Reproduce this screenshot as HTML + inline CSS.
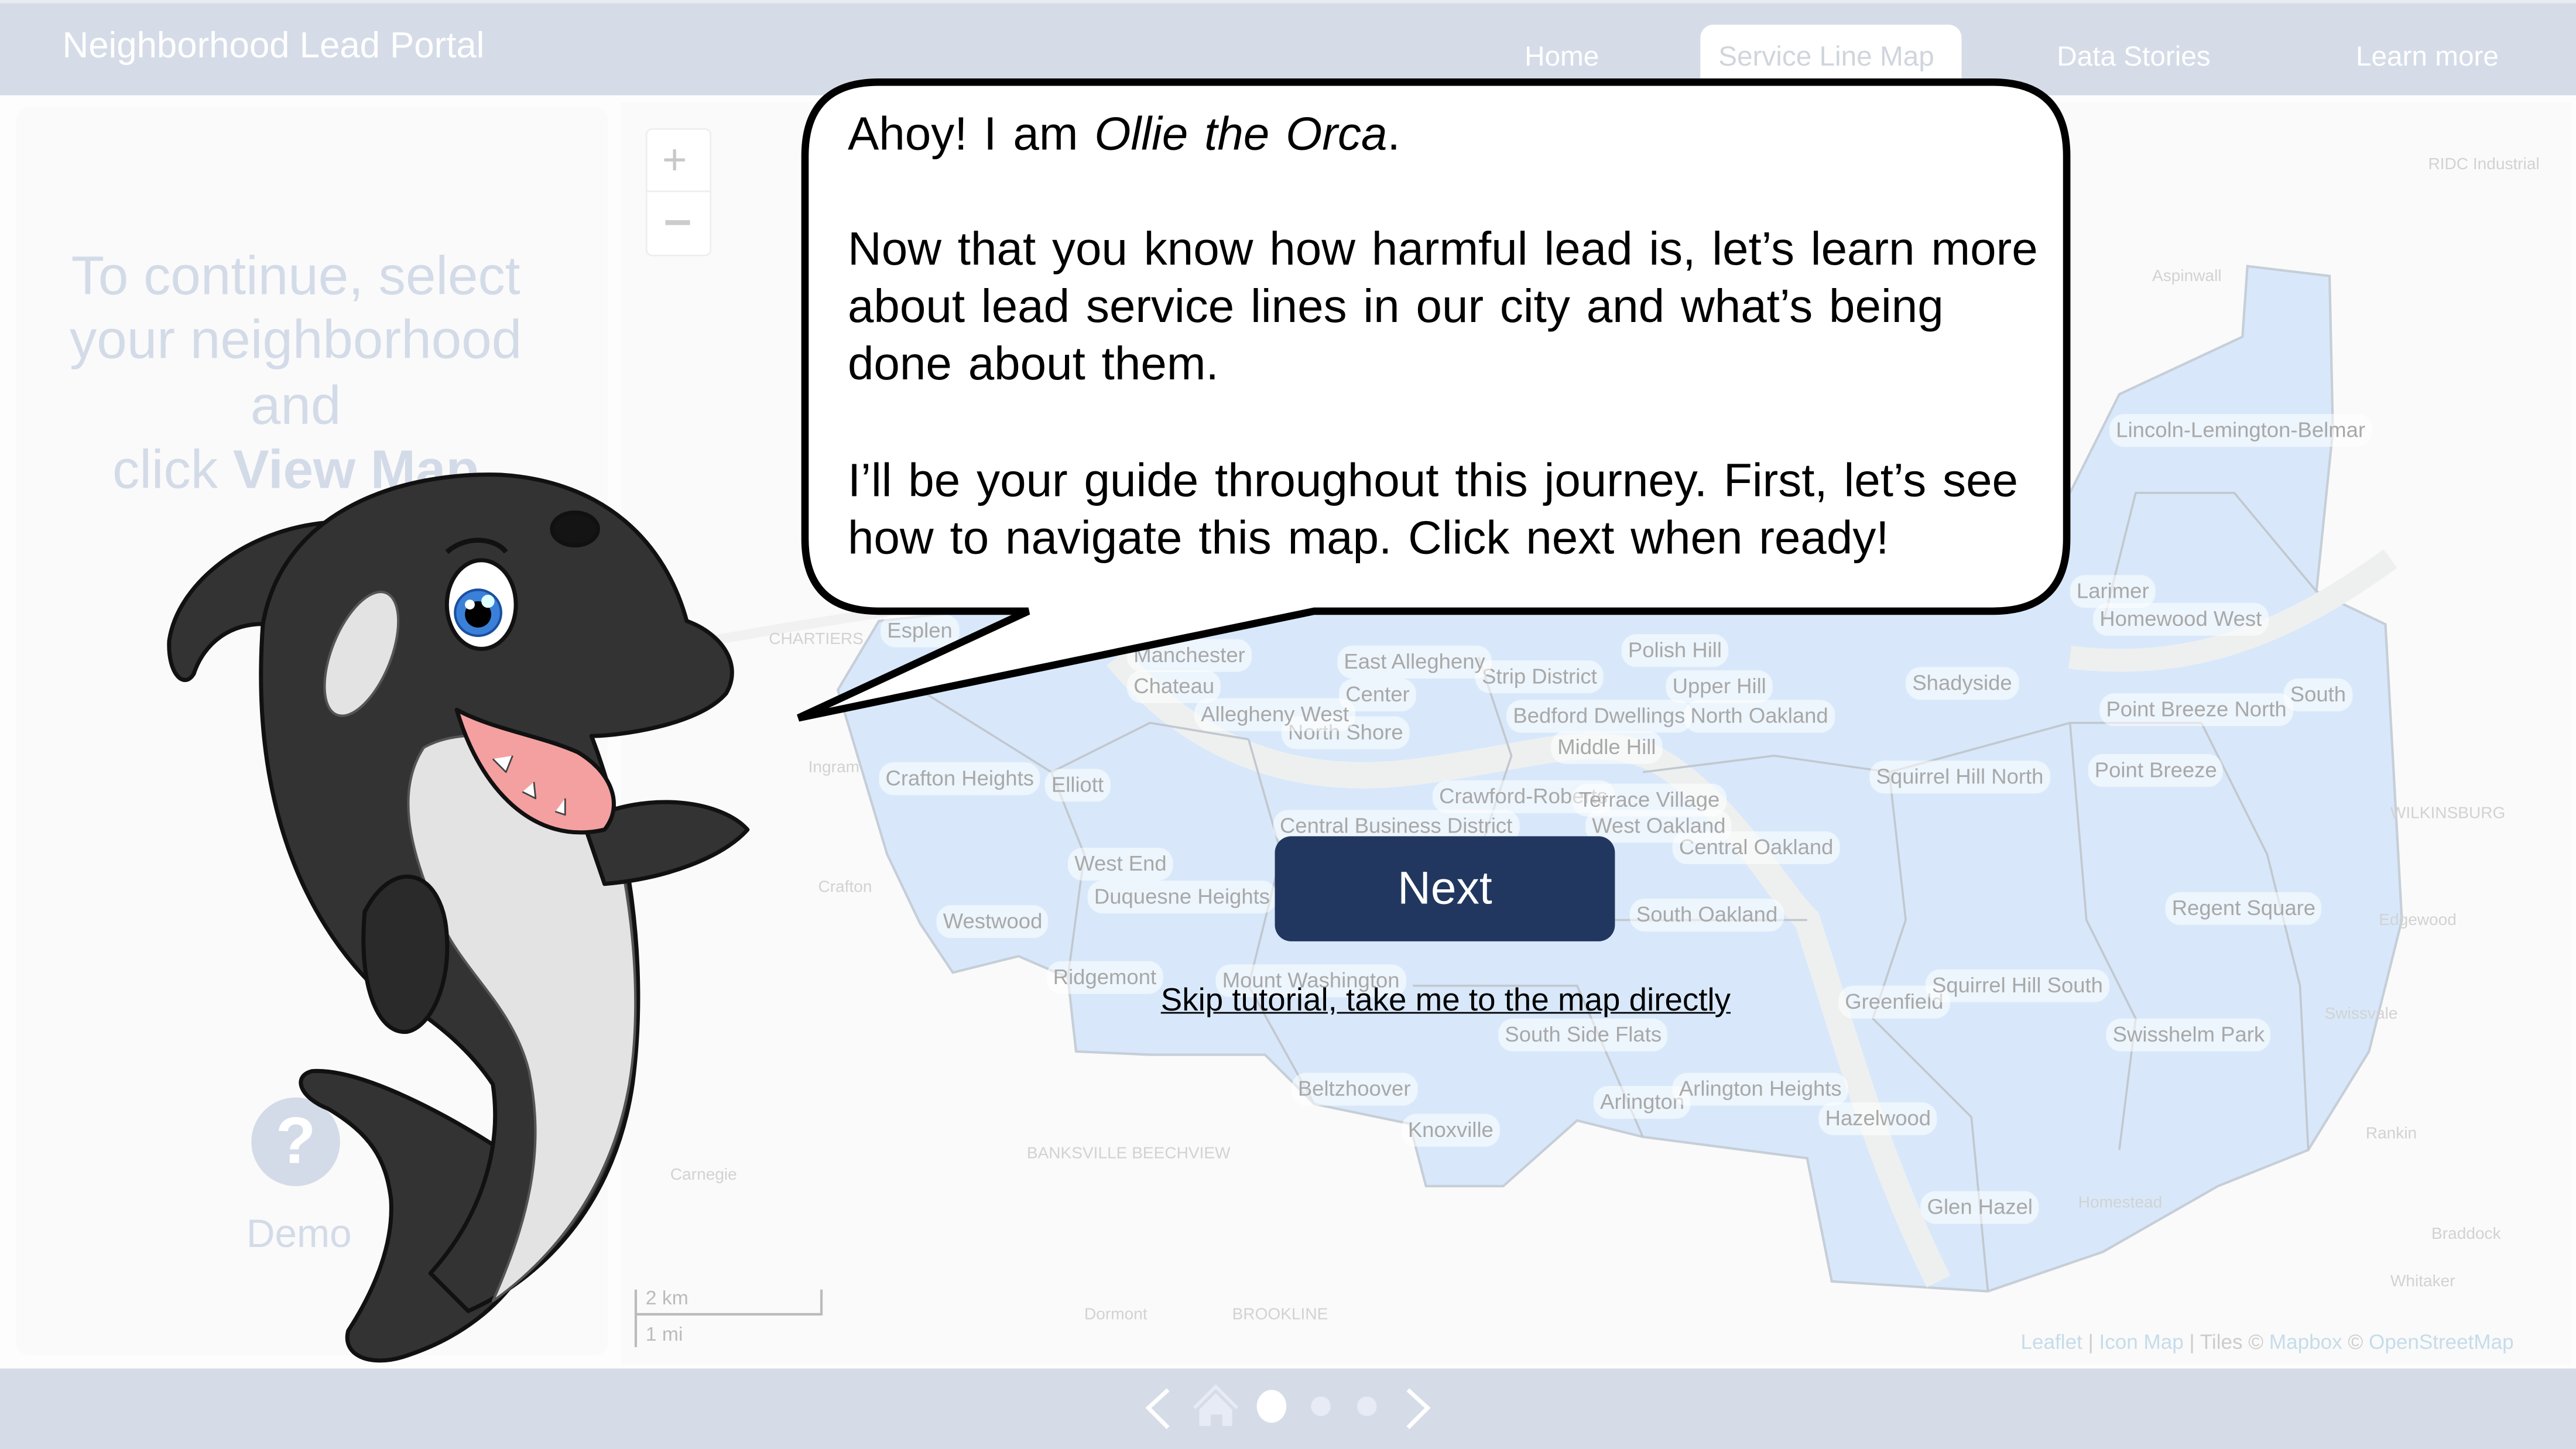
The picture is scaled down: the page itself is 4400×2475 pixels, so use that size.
<!DOCTYPE html>
<html><head><meta charset="utf-8">
<style>
html,body{margin:0;padding:0;width:4400px;height:2475px;overflow:hidden;background:#fff}
#s{position:absolute;left:0;top:0;width:1568px;height:882px;transform:scale(2.80612,2.80612);transform-origin:0 0;font-family:"Liberation Sans",Arial,sans-serif;background:#fff;overflow:hidden}
.abs{position:absolute}
.hdr{left:0;top:0;width:1568px;height:57px;background:#d5dce8;border-top:2px solid #e8ecf2}
.nav{color:#fff;font-size:17px;top:25px}
.lbl{position:absolute;background:rgba(255,255,255,0.55);border-radius:9px;color:#a8a8a8;font-size:13px;padding:2px 4px;white-space:nowrap;line-height:16px}
.faint{position:absolute;color:#d2d2d2;font-size:10px;white-space:nowrap}
.bt{font-size:28.5px;color:#000;position:absolute;left:516px;white-space:nowrap;word-spacing:2px}
</style></head><body>
<div id="s">
<div class="abs hdr"></div>
<div class="abs" style="left:38px;top:15px;color:#fff;font-size:22px;">Neighborhood Lead Portal</div>
<div class="abs nav" style="left:928px;">Home</div>
<div class="abs" style="left:1035px;top:15px;width:159px;height:43px;background:#fff;border-radius:8px 8px 0 0"></div>
<div class="abs nav" style="left:1046px;color:#d0d5dd">Service Line Map</div>
<div class="abs nav" style="left:1252px;">Data Stories</div>
<div class="abs nav" style="left:1434px;">Learn more</div>

<div class="abs" style="left:0;top:58px;width:1568px;height:775px;background:#fdfdfd"></div>
<div class="abs" style="left:10px;top:65px;width:360px;height:760px;background:#fafafa;border-radius:8px"></div>
<div class="abs" style="left:378px;top:62px;width:1187px;height:768px;background:#fafafa"></div>

<svg class="abs" style="left:0;top:0" width="1568" height="882">
 <path d="M380 400 C480 380 560 370 620 360" stroke="#f0f1f0" stroke-width="6" fill="none"/>
 <path d="M535 378 L700 360 L1080 360 L1260 300 L1290 240 L1365 205 L1368 162 L1418 168 L1420 262 L1410 360 L1452 380 L1462 560 L1442 640 L1405 700 L1350 722 L1280 762 L1210 786 L1115 780 L1100 705 L1000 692 L960 682 L915 722 L868 722 L858 684 L800 672 L770 642 L700 642 L655 640 L650 595 L620 582 L580 592 L560 562 L540 520 L525 470 L510 420 Z" fill="#d8e8fa" stroke="#c6ced8" stroke-width="1.5"/>
 <path d="M680 400 C720 450 780 480 860 470 C940 460 980 440 1020 470 C1060 500 1080 540 1100 560 C1120 620 1140 700 1180 780" stroke="#eef0f0" stroke-width="16" fill="none"/>
 <path d="M1260 400 C1340 410 1400 380 1455 340" stroke="#eef0f0" stroke-width="14" fill="none"/>
 <g stroke="#c2c8cf" stroke-width="1.3" fill="none">
  <path d="M560 420 L640 470 L700 440 L760 450"/><path d="M640 470 L660 520 L650 595"/>
  <path d="M760 450 L780 520 L760 600 L800 672"/><path d="M900 400 L920 460 L900 520"/>
  <path d="M1000 470 L1080 460 L1150 470 L1260 440 L1340 440"/><path d="M1150 470 L1160 560 L1140 620 L1200 680 L1210 786"/>
  <path d="M1260 440 L1270 560 L1300 620 L1290 700"/><path d="M1340 440 L1380 520 L1400 600 L1405 700"/>
  <path d="M1280 380 L1300 300 L1360 300 L1410 360"/><path d="M960 560 L1100 560"/><path d="M860 600 L960 600 L1000 692"/>
 </g>
 <path d="M387 785 L387 800 L500 800 L500 785 M387 800 L387 820" stroke="#bbb" stroke-width="1.5" fill="none"/>
</svg>
<div class="abs" style="left:393px;top:783px;color:#bbb;font-size:12px">2 km</div>
<div class="abs" style="left:393px;top:805px;color:#bbb;font-size:12px">1 mi</div>
<div class="abs" style="left:1230px;top:810px;font-size:12.5px;color:#c5dcea;white-space:nowrap">Leaflet <span style="color:#ccc">|</span> Icon Map <span style="color:#ccc">| Tiles ©</span> Mapbox <span style="color:#ccc">©</span> OpenStreetMap</div>

<div class="lbl" style="left:535px;top:464px">Crafton Heights</div>
<div class="lbl" style="left:636px;top:468px">Elliott</div>
<div class="lbl" style="left:650px;top:516px">West End</div>
<div class="lbl" style="left:662px;top:536px">Duquesne Heights</div>
<div class="lbl" style="left:570px;top:551px">Westwood</div>
<div class="lbl" style="left:637px;top:585px">Ridgemont</div>
<div class="lbl" style="left:740px;top:587px">Mount Washington</div>
<div class="lbl" style="left:912px;top:620px">South Side Flats</div>
<div class="lbl" style="left:786px;top:653px">Beltzhoover</div>
<div class="lbl" style="left:853px;top:678px">Knoxville</div>
<div class="lbl" style="left:970px;top:661px">Arlington</div>
<div class="lbl" style="left:1018px;top:653px">Arlington Heights</div>
<div class="lbl" style="left:1107px;top:671px">Hazelwood</div>
<div class="lbl" style="left:1169px;top:725px">Glen Hazel</div>
<div class="lbl" style="left:1119px;top:600px">Greenfield</div>
<div class="lbl" style="left:1172px;top:590px">Squirrel Hill South</div>
<div class="lbl" style="left:1282px;top:620px">Swisshelm Park</div>
<div class="lbl" style="left:1318px;top:543px">Regent Square</div>
<div class="lbl" style="left:992px;top:547px">South Oakland</div>
<div class="lbl" style="left:1018px;top:506px">Central Oakland</div>
<div class="lbl" style="left:775px;top:493px">Central Business District</div>
<div class="lbl" style="left:872px;top:475px">Crawford-Roberts</div>
<div class="lbl" style="left:957px;top:477px">Terrace Village</div>
<div class="lbl" style="left:965px;top:493px">West Oakland</div>
<div class="lbl" style="left:944px;top:445px">Middle Hill</div>
<div class="lbl" style="left:917px;top:426px">Bedford Dwellings</div>
<div class="lbl" style="left:1025px;top:426px">North Oakland</div>
<div class="lbl" style="left:1014px;top:408px">Upper Hill</div>
<div class="lbl" style="left:898px;top:402px">Strip District</div>
<div class="lbl" style="left:987px;top:386px">Polish Hill</div>
<div class="lbl" style="left:1138px;top:463px">Squirrel Hill North</div>
<div class="lbl" style="left:1271px;top:459px">Point Breeze</div>
<div class="lbl" style="left:1278px;top:422px">Point Breeze North</div>
<div class="lbl" style="left:1160px;top:406px">Shadyside</div>
<div class="lbl" style="left:1274px;top:367px">Homewood West</div>
<div class="lbl" style="left:1260px;top:350px">Larimer</div>
<div class="lbl" style="left:1284px;top:252px">Lincoln-Lemington-Belmar</div>
<div class="lbl" style="left:780px;top:436px">North Shore</div>
<div class="lbl" style="left:815px;top:413px">Center</div>
<div class="lbl" style="left:814px;top:393px">East Allegheny</div>
<div class="lbl" style="left:686px;top:408px">Chateau</div>
<div class="lbl" style="left:686px;top:389px">Manchester</div>
<div class="lbl" style="left:727px;top:425px">Allegheny West</div>
<div class="lbl" style="left:536px;top:374px">Esplen</div>
<div class="lbl" style="left:1390px;top:413px">South</div>
<div class="faint" style="left:492px;top:462px">Ingram</div>
<div class="faint" style="left:498px;top:535px">Crafton</div>
<div class="faint" style="left:468px;top:384px">CHARTIERS</div>
<div class="faint" style="left:1448px;top:555px">Edgewood</div>
<div class="faint" style="left:1415px;top:612px">Swissvale</div>
<div class="faint" style="left:1440px;top:685px">Rankin</div>
<div class="faint" style="left:1455px;top:490px">WILKINSBURG</div>
<div class="faint" style="left:1265px;top:727px">Homestead</div>
<div class="faint" style="left:1455px;top:775px">Whitaker</div>
<div class="faint" style="left:1480px;top:746px">Braddock</div>
<div class="faint" style="left:660px;top:795px">Dormont</div>
<div class="faint" style="left:750px;top:795px">BROOKLINE</div>
<div class="faint" style="left:625px;top:697px">BANKSVILLE BEECHVIEW</div>
<div class="faint" style="left:408px;top:710px">Carnegie</div>
<div class="faint" style="left:1310px;top:163px">Aspinwall</div>
<div class="faint" style="left:1478px;top:95px">RIDC Industrial</div>

<div class="abs" style="left:393px;top:78px;width:38px;height:76px;background:#fff;border:1.5px solid #eee;border-radius:4px"></div>
<div class="abs" style="left:394px;top:116px;width:38px;height:1px;background:#eee"></div>
<div class="abs" style="left:403px;top:82px;color:#c8c8c8;font-size:26px">+</div>
<div class="abs" style="left:405px;top:134px;width:15px;height:2.5px;background:#ccc"></div>

<div class="abs" style="left:10px;top:148px;width:340px;text-align:center;color:#d3dbe8;font-size:33px;line-height:39.3px">To continue, select<br>your neighborhood<br>and<br>click <b>View Map</b></div>
<div class="abs" style="left:153px;top:668px;width:54px;height:54px;border-radius:50%;background:#d3dbe8;color:#fff;font-size:40px;font-weight:bold;text-align:center;line-height:54px">?</div>
<div class="abs" style="left:150px;top:738px;color:#d3dbe8;font-size:24px">Demo</div>

<svg class="abs" style="left:0;top:0" width="1568" height="882">
 <path d="M535 50 L1213 50 Q1258 50 1258 95 L1258 328 Q1258 372 1213 372 L800 372 L486 437 L626 372 L535 372 Q490 372 490 328 L490 95 Q490 50 535 50 Z" fill="#fff" stroke="#000" stroke-width="4.5" stroke-linejoin="miter"/>
</svg>
<div class="bt" style="top:66px">Ahoy! I am <i>Ollie the Orca</i>.</div>
<div class="bt" style="top:136px">Now that you know how harmful lead is, let’s learn more</div>
<div class="bt" style="top:171px">about lead service lines in our city and what’s being</div>
<div class="bt" style="top:206px">done about them.</div>
<div class="bt" style="top:277px">I’ll be your guide throughout this journey. First, let’s see</div>
<div class="bt" style="top:312px">how to navigate this map. Click next when ready!</div>

<div class="abs" style="left:776px;top:509px;width:207px;height:64px;background:#21375f;border-radius:10px;color:#fff;font-size:28px;text-align:center;line-height:64px">Next</div>
<div class="abs" style="left:680px;top:598px;width:400px;text-align:center;color:#000;font-size:19.5px;text-decoration:underline">Skip tutorial, take me to the map directly</div>

<div class="abs" style="left:0;top:833px;width:1568px;height:49px;background:#d5dce8"></div>
<svg class="abs" style="left:0;top:833px" width="1568" height="49">
 <path d="M711 13 L699 24 L711 36" stroke="#fff" stroke-width="2.5" fill="none"/>
 <path d="M857 13 L869 24 L857 36" stroke="#fff" stroke-width="2.5" fill="none"/>
 <path d="M727 24 L740 11 L753 24" stroke="#e6ebf5" stroke-width="2" fill="none"/>
 <path d="M730 25 L740 15 L750 25 L750 35 L744 35 L744 28 L737 28 L737 35 L730 35 Z" fill="#e6ebf5"/>
 <ellipse cx="774" cy="23" rx="9" ry="10" fill="#fff"/>
 <circle cx="804" cy="23" r="6" fill="#e6ebf5"/>
 <circle cx="832" cy="23" r="6" fill="#e6ebf5"/>
</svg>

<svg class="abs" style="left:0;top:0" width="1568" height="882">
 <g stroke="#111" stroke-width="2.5" stroke-linejoin="round">
  <path d="M200 318 C150 322 108 355 103 390 C102 410 112 420 118 410 C124 392 140 378 165 380 Z" fill="#333"/>
  <path d="M305 700 C275 680 220 650 190 652 C178 655 182 668 200 675 C225 690 235 705 238 730 C240 760 225 790 212 810 C208 825 225 832 245 826 C280 815 305 795 320 770 Z" fill="#333"/>
  <path d="M160 380 C172 310 245 287 305 289 C368 293 405 330 418 378 C440 386 452 405 442 422 C425 442 375 448 360 448 C382 505 395 585 385 660 C375 728 335 776 285 798 L262 775 C292 742 306 700 300 660 C280 630 248 610 225 598 C188 560 152 492 160 380 Z" fill="#333"/>
  <path d="M258 455 C285 440 330 450 362 468 C382 520 393 600 383 660 C372 722 338 765 300 792 C322 742 332 700 322 652 C312 612 282 592 268 560 C250 520 240 482 258 455 Z" fill="#e3e3e3" stroke="#555" stroke-width="1.5"/>
  <path d="M222 555 C240 520 270 530 272 570 C274 600 262 625 248 628 C230 630 218 600 222 555 Z" fill="#2a2a2a"/>
  <path d="M355 500 C395 480 440 488 455 505 C440 522 405 535 368 538 Z" fill="#333"/>
  <path d="M278 432 C292 480 325 515 368 505 C380 490 372 470 352 458 C330 448 300 444 278 432 Z" fill="#f4a0a0"/>
  <path d="M300 462 L308 470 L312 460 M318 482 L326 486 L325 476 M338 494 L344 496 L344 486" fill="#fff" stroke="#444" stroke-width="1"/>
  <ellipse cx="220" cy="398" rx="18" ry="40" transform="rotate(22 220 398)" fill="#e3e3e3" stroke="#555" stroke-width="1.5"/>
  <ellipse cx="293" cy="368" rx="21" ry="27" fill="#fff"/>
  <circle cx="291" cy="373" r="14" fill="#3b80d8" stroke="#1a4fa0" stroke-width="1.5"/>
  <circle cx="291" cy="374" r="8" fill="#000" stroke="none"/>
  <circle cx="286" cy="368" r="3" fill="#fff" stroke="none"/>
  <circle cx="297" cy="366" r="4" fill="#dff" stroke="none"/>
  <path d="M272 336 C285 325 302 328 308 336" fill="none" stroke-width="3"/>
  <ellipse cx="350" cy="322" rx="14" ry="10" fill="#141414"/>
 </g>
</svg>
</div>
</body></html>
